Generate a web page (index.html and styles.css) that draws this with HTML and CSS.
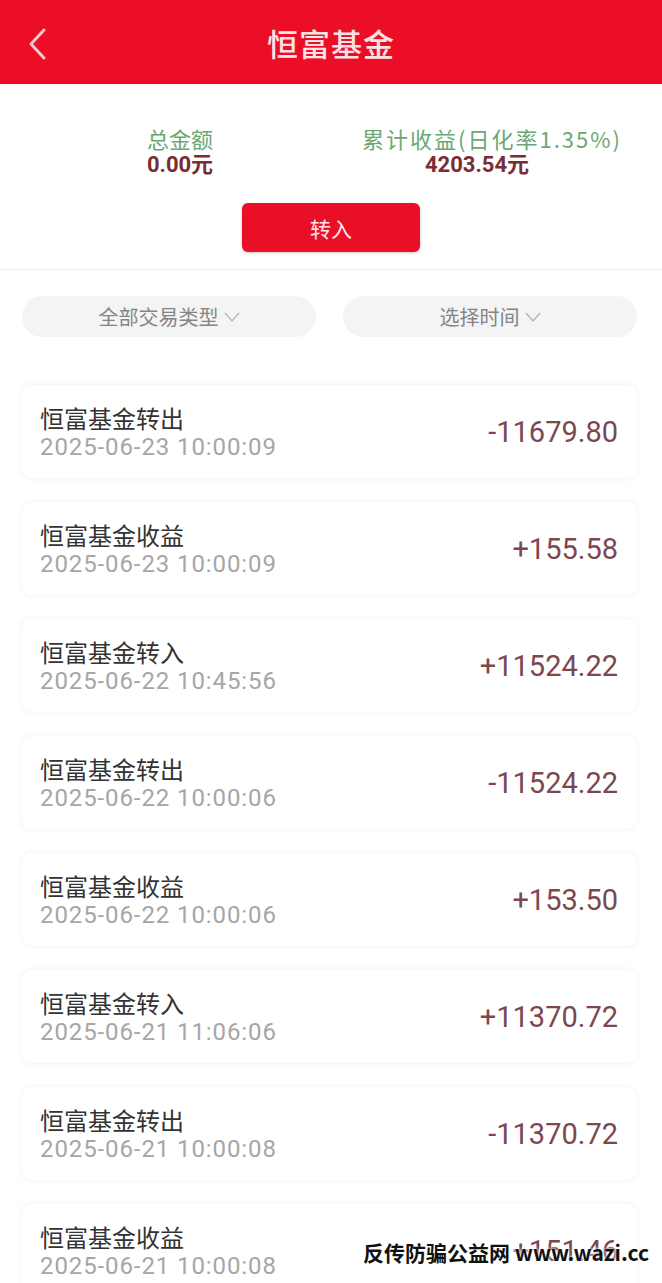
FILE: index.html
```html
<!DOCTYPE html>
<html>
<head>
	<title>恒富基金</title>
	<meta charset="utf-8">
	<link rel="stylesheet" href="styles.css">
</head>
<body>
	<div class="page">
		<header class="topbar">
			<svg class="back" width="22" height="34" viewBox="0 0 22 34"><polyline points="18,3 5,17 18,31" fill="none" stroke="#f7c9cd" stroke-width="3" stroke-linecap="round" stroke-linejoin="round"/></svg>
			<h1>恒富基金</h1>
		</header>

		<section class="summary">
			<div class="stats">
				<div class="stat">
					<div class="label">总金额</div>
					<div class="value">0.00元</div>
				</div>
				<div class="stat">
					<div class="label wide">累计收益(日化率1.35%)</div>
					<div class="value shifted">4203.54元</div>
				</div>
			</div>
			<button class="deposit">转入</button>
		</section>

		<div class="filters">
			<div class="pill">全部交易类型<svg width="16" height="10" viewBox="0 0 16 10"><polyline points="1,1 8,9 15,1" fill="none" stroke="#b5b5b5" stroke-width="1.3"/></svg></div>
			<div class="pill">选择时间<svg width="16" height="10" viewBox="0 0 16 10"><polyline points="1,1 8,9 15,1" fill="none" stroke="#b5b5b5" stroke-width="1.3"/></svg></div>
		</div>

		<ul class="records">
			<li class="record">
				<div><div class="name">恒富基金转出</div><div class="date">2025-06-23 10:00:09</div></div>
				<div class="amount">-11679.80</div>
			</li>
			<li class="record">
				<div><div class="name">恒富基金收益</div><div class="date">2025-06-23 10:00:09</div></div>
				<div class="amount">+155.58</div>
			</li>
			<li class="record">
				<div><div class="name">恒富基金转入</div><div class="date">2025-06-22 10:45:56</div></div>
				<div class="amount">+11524.22</div>
			</li>
			<li class="record">
				<div><div class="name">恒富基金转出</div><div class="date">2025-06-22 10:00:06</div></div>
				<div class="amount">-11524.22</div>
			</li>
			<li class="record">
				<div><div class="name">恒富基金收益</div><div class="date">2025-06-22 10:00:06</div></div>
				<div class="amount">+153.50</div>
			</li>
			<li class="record">
				<div><div class="name">恒富基金转入</div><div class="date">2025-06-21 11:06:06</div></div>
				<div class="amount">+11370.72</div>
			</li>
			<li class="record">
				<div><div class="name">恒富基金转出</div><div class="date">2025-06-21 10:00:08</div></div>
				<div class="amount">-11370.72</div>
			</li>
			<li class="record">
				<div><div class="name">恒富基金收益</div><div class="date">2025-06-21 10:00:08</div></div>
				<div class="amount">+151.46</div>
			</li>
		</ul>

		<div class="watermark">反传防骗公益网 www.wazi.cc</div>
	</div>
</body>
</html>
```

FILE: styles.css
```css
html, body{
	margin: 0;
	padding: 0;
	background: #fff;
}
body{
	font-family: Roboto, "Noto Sans CJK SC", sans-serif;
	overflow: hidden;
}
.page{
	position: relative;
	width: 662px;
	height: 1283px;
	overflow: hidden;
}
.topbar{
	height: 84px;
	background: #ec0d26;
	display: flex;
	align-items: center;
	justify-content: center;
	position: relative;
}
.topbar h1{
	margin: 0;
	color: #fbe3e5;
	font-family: "Noto Sans CJK SC", sans-serif;
	font-size: 31px;
	font-weight: 500;
	letter-spacing: 1px;
}
.back{
	position: absolute;
	left: 26px;
	top: 27px;
}
.summary{
	padding: 41px 0 17px;
	border-bottom: 1px solid #ececec;
	display: flex;
	flex-direction: column;
	align-items: center;
}
.stats{
	display: grid;
	grid-template-columns: 360px 1fr;
	width: 100%;
	padding-right: 38px;
	box-sizing: border-box;
}
.stat{
	text-align: center;
}
.label{
	color: #69a874;
	font-size: 22px;
	line-height: 27px;
	font-family: "Noto Sans CJK SC", sans-serif;
}
.label.wide{
	letter-spacing: 2px;
}
.value{
	color: #7b2c33;
	font-size: 22px;
	line-height: 26px;
	font-weight: bold;
}
.value.shifted{
	padding-right: 30px;
}
.deposit{
	margin-top: 25px;
	width: 178px;
	height: 49px;
	border: none;
	border-radius: 6px;
	background: #e80f27;
	color: #fde6e8;
	font-family: "Noto Sans CJK SC", sans-serif;
	font-size: 21px;
	box-shadow: 0 1px 3px rgba(120, 0, 0, 0.25);
}
.filters{
	display: flex;
	gap: 27px;
	padding: 26px 25px 0 22px;
}
.pill{
	flex: 1;
	height: 41px;
	border-radius: 21px;
	background: #f4f4f4;
	color: #858585;
	font-family: "Noto Sans CJK SC", sans-serif;
	font-size: 20px;
	display: flex;
	align-items: center;
	justify-content: center;
	gap: 5px;
}
.records{
	list-style: none;
	margin: 0;
	padding: 48px 25px 0 22px;
	display: flex;
	flex-direction: column;
	gap: 24px;
}
.record{
	height: 93px;
	box-sizing: border-box;
	padding: 0 19px 0 18px;
	border-radius: 10px;
	background: #fff;
	box-shadow: 0 0 6px rgba(0, 0, 0, 0.07);
	display: flex;
	align-items: center;
	justify-content: space-between;
}
.name{
	color: #333;
	font-family: "Noto Sans CJK SC", sans-serif;
	font-size: 24px;
	line-height: 30px;
}
.date{
	color: #a6a6a6;
	font-size: 24px;
	line-height: 28px;
	letter-spacing: 0.9px;
}
.amount{
	color: #7d4750;
	font-size: 29px;
}
.watermark{
	position: absolute;
	right: 13px;
	bottom: 16px;
	color: #111;
	font-family: "Noto Sans CJK SC", sans-serif;
	font-size: 21px;
	font-weight: bold;
	text-shadow: 0 0 3px #fff, 0 0 3px #fff;
}
```
